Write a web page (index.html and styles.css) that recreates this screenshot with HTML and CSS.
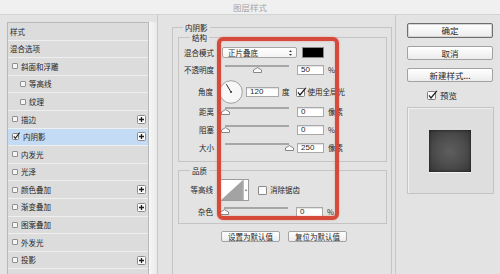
FILE: index.html
```html
<!DOCTYPE html>
<html lang="zh-CN">
<head>
<meta charset="utf-8">
<title>图层样式</title>
<link rel="stylesheet" href="styles.css">
</head>
<body>
<div class="titlebar">图层样式</div>
<div class="dialog">
  <div class="left">
    <div class="list">
      <div class="item">样式</div>
      <div class="item">混合选项</div>
      <div class="item"><span class="cb"></span>斜面和浮雕</div>
      <div class="item sub"><span class="cb"></span>等高线</div>
      <div class="item sub"><span class="cb"></span>纹理</div>
      <div class="item"><span class="cb"></span>描边<svg class="plus" viewBox="0 0 9 9"><rect x=".5" y=".5" width="8" height="8" rx="1"/><path d="M4.5 2V7M2 4.5H7"/></svg></div>
      <div class="item sel"><svg class="cbon" viewBox="0 0 9 8"><rect x=".5" y="1.5" width="6" height="6" rx="1"/><path d="M1.8 4.4L3.3 6.3L7.6 0.6"/></svg>内阴影<svg class="plus" viewBox="0 0 9 9"><rect x=".5" y=".5" width="8" height="8" rx="1"/><path d="M4.5 2V7M2 4.5H7"/></svg></div>
      <div class="item"><span class="cb"></span>内发光</div>
      <div class="item"><span class="cb"></span>光泽</div>
      <div class="item"><span class="cb"></span>颜色叠加<svg class="plus" viewBox="0 0 9 9"><rect x=".5" y=".5" width="8" height="8" rx="1"/><path d="M4.5 2V7M2 4.5H7"/></svg></div>
      <div class="item"><span class="cb"></span>渐变叠加<svg class="plus" viewBox="0 0 9 9"><rect x=".5" y=".5" width="8" height="8" rx="1"/><path d="M4.5 2V7M2 4.5H7"/></svg></div>
      <div class="item"><span class="cb"></span>图案叠加</div>
      <div class="item"><span class="cb"></span>外发光</div>
      <div class="item"><span class="cb"></span>投影<svg class="plus" viewBox="0 0 9 9"><rect x=".5" y=".5" width="8" height="8" rx="1"/><path d="M4.5 2V7M2 4.5H7"/></svg></div>
      <div class="item"></div>
    </div>
    <div class="scroll"></div>
  </div>

  <div class="mid">
    <fieldset class="outer">
      <legend>内阴影</legend>
      <fieldset class="group struct">
        <legend>结构</legend>
        <div class="row r-blend">
          <span class="lbl">混合模式</span>
          <div class="select"><span>正片叠底</span><svg class="updown" viewBox="0 0 5 8"><path d="M1 3L2.5 1.2L4 3ZM1 5L2.5 6.8L4 5Z"/></svg></div>
          <span class="color"></span>
        </div>
        <div class="row r-opacity">
          <span class="lbl">不透明度</span>
          <div class="slider"><svg class="thumb" style="left:50%" viewBox="0 0 9 6"><path d="M.5 5.5V3L4.5.6L8.5 3V5.5Z"/></svg></div>
          <span class="field">50</span><span class="unit">%</span>
        </div>
        <div class="row r-angle">
          <span class="lbl">角度</span>
          <svg class="dial" viewBox="0 0 24 24"><circle cx="12" cy="12" r="11.3"/><path d="M12 12L7.3 4.2"/><circle class="dot" cx="12" cy="12" r="1"/></svg>
          <span class="field wide">120</span><span class="unit u-deg">度</span>
          <svg class="chk" viewBox="0 0 11 10"><rect x=".5" y="1.5" width="8" height="8" rx="1"/><path d="M2 5.4L4 8L9.8 0.8"/></svg><span class="chklbl">使用全局光</span>
        </div>
        <div class="row r-dist">
          <span class="lbl">距离</span>
          <div class="slider"><svg class="thumb" style="left:0%" viewBox="0 0 9 6"><path d="M.5 5.5V3L4.5.6L8.5 3V5.5Z"/></svg></div>
          <span class="field">0</span><span class="unit">像素</span>
        </div>
        <div class="row r-choke">
          <span class="lbl">阻塞</span>
          <div class="slider"><svg class="thumb" style="left:0%" viewBox="0 0 9 6"><path d="M.5 5.5V3L4.5.6L8.5 3V5.5Z"/></svg></div>
          <span class="field">0</span><span class="unit">%</span>
        </div>
        <div class="row r-size">
          <span class="lbl">大小</span>
          <div class="slider"><svg class="thumb" style="left:100%" viewBox="0 0 9 6"><path d="M.5 5.5V3L4.5.6L8.5 3V5.5Z"/></svg></div>
          <span class="field">250</span><span class="unit">像素</span>
        </div>
      </fieldset>

      <fieldset class="group quality">
        <legend>品质</legend>
        <div class="row r-contour">
          <span class="lbl">等高线</span>
          <div class="contour">
            <svg class="curve" viewBox="0 0 24 22"><rect width="24" height="22" fill="#fff"/><path d="M0 22L24 0V22Z" fill="#a3a3a3"/></svg>
            <span class="drop"><svg viewBox="0 0 5 4"><path d="M1 1H4L2.5 3Z"/></svg></span>
          </div>
          <span class="box"></span><span class="chklbl">消除锯齿</span>
        </div>
        <div class="row r-noise">
          <span class="lbl">杂色</span>
          <div class="slider"><svg class="thumb" style="left:0%" viewBox="0 0 9 6"><path d="M.5 5.5V3L4.5.6L8.5 3V5.5Z"/></svg></div>
          <span class="field">0</span><span class="unit">%</span>
        </div>
      </fieldset>

      <div class="btnrow">
        <span class="sbtn">设置为默认值</span>
        <span class="sbtn">复位为默认值</span>
      </div>
    </fieldset>
  </div>

  <div class="right">
    <div class="btn default">确定</div>
    <div class="btn">取消</div>
    <div class="btn">新建样式...</div>
    <div class="preview-row">
      <svg class="chk" viewBox="0 0 11 10"><rect x=".5" y="1.5" width="8" height="8" rx="1"/><path d="M2 5.4L4 8L9.8 0.8"/></svg><span class="chklbl big">预览</span>
    </div>
    <div class="preview"><div class="sample"></div></div>
  </div>
</div>
<div class="annot"></div>
</body>
</html>
```

FILE: styles.css
```css
* { box-sizing: border-box; }
html, body { margin: 0; padding: 0; }
body {
  width: 500px;
  height: 274px;
  overflow: hidden;
  position: relative;
  background: #e3e3e3;
  color: #1f1f1f;
  font-family: "Noto Sans CJK SC", "Noto Sans", sans-serif;
}

.titlebar {
  height: 15px;
  background: #f0f0f0;
  border-bottom: 1px solid #d3d3d3;
  text-align: center;
  font-size: 8.5px;
  line-height: 14px;
  color: #a5a5a5;
}

.dialog { display: flex; height: 259px; overflow: hidden; }

/* left list */
.left {
  width: 158px;
  display: flex;
  padding: 7px 0 0 7px;
  border-right: 1px solid #c8c8c8;
  overflow: hidden;
}
.list {
  width: 142px;
  border: 1px solid #b8b8b8;
  border-bottom: none;
  background: #dadada;
  font-size: 7.5px;
  line-height: 1;
  overflow: hidden;
}
.scroll { width: 8px; background: linear-gradient(to right, #f7f7f7, #e9e9e9); }
.item {
  height: 17.6px;
  display: flex;
  align-items: center;
  padding-left: 2px;
  border-bottom: 1px solid #efefef;
  background: #dcdcdc;
  color: #262626;
}
.item.sel { background: #c3dbf4; }
.cb {
  width: 6px; height: 6px;
  border: 1px solid #8f8f8f;
  background: #f6f6f6;
  border-radius: 1px;
  margin: 0 3px 0 2px;
  flex: none;
}
.item.sub .cb { margin-left: 10px; }
.cbon { width: 9px; height: 8px; margin: -1px 2px 0 2px; flex: none; }
.cbon rect { fill: #f6f6f6; stroke: #7d7d7d; }
.cbon path { fill: none; stroke: #222; stroke-width: 1.1; }
.plus { width: 9px; height: 9px; margin-left: auto; margin-right: 2px; flex: none; }
.plus rect { fill: #fdfdfd; stroke: #8a8a8a; }
.plus path { stroke: #1e1e1e; stroke-width: 1.3; }

/* middle */
.mid {
  width: 238px;
  border-right: 1px solid #c8c8c8;
  padding: 7.5px 3px 0 14px;
  overflow: hidden;
}
fieldset { margin: 0; min-width: 0; border: 1px solid #c4c4c4; }
legend {
  font-size: 7.5px;
  line-height: 9px;
  padding: 0 2px;
  color: #222;
}
.outer {
  height: 251px;
  border-bottom: none;
  padding: 0 4px 0 5px;
}
.outer > legend { margin-left: 5px; }
.group { padding: 0; }
.group > legend { margin-left: 11px; }
.struct { margin-top: 1px; padding-bottom: 8px; }
.quality { margin-top: 3.5px; padding-bottom: 6px; }

.row { display: flex; align-items: center; font-size: 7.5px; }
.lbl { width: 35px; text-align: right; flex: none; line-height: 1; }
.r-blend { height: 11px; margin-top: 5.5px; }
.r-opacity { height: 10px; margin-top: 7px; }
.r-angle { height: 24px; margin-top: 5px; }
.r-dist { height: 10px; margin-top: 3px; }
.r-choke, .r-size { height: 10px; margin-top: 8px; }
.r-contour { height: 22px; margin-top: 4.5px; }
.r-noise { height: 10px; margin-top: 6px; }
.r-angle .lbl, .r-contour .lbl, .r-noise .lbl { width: 34px; }

.select {
  width: 75px; height: 11px;
  margin-left: 8px;
  background: linear-gradient(#ffffff, #f3f3f3);
  border: 1px solid #a6a6a6;
  border-radius: 2px;
  display: flex; align-items: center;
  padding: 0 3px 0 5px;
  font-size: 7.5px;
  line-height: 1;
}
.select span { flex: 1; }
.updown { width: 5px; height: 8px; }
.updown path { fill: #333; }
.color {
  width: 22px; height: 11px;
  margin-left: 5px;
  background: #000;
  border: 1px solid #8a8a8a;
}

.slider {
  position: relative;
  width: 64px; height: 10px;
  margin-left: 11px;
  align-self: flex-start;
  border-top: 2px solid #a7a7a7;
}
.thumb {
  position: absolute;
  top: 0;
  width: 9px; height: 6px;
  margin-left: -4.5px;
}
.thumb path { fill: #fbfbfb; stroke: #7a7a7a; stroke-width: 0.9; }

.field {
  width: 27px; height: 10px;
  margin-left: 8px;
  background: #fff;
  border: 1px solid #a9a9a9;
  box-shadow: inset 0 1px 1px rgba(0,0,0,0.12);
  font-family: "Liberation Sans", sans-serif;
  font-size: 8px;
  line-height: 8px;
  padding-left: 3px;
  flex: none;
}
.field.wide { width: 33px; margin-left: 3px; }
.unit { margin-left: 4px; line-height: 1; }
.u-deg { margin-left: 3px; }

.dial { width: 24px; height: 24px; margin-left: 6px; flex: none; }
.dial circle { fill: #f7f7f7; stroke: #8c8c8c; stroke-width: 0.8; }
.dial path { stroke: #333; stroke-width: 1; }
.dial .dot { fill: #333; stroke: none; }

.chk { width: 11px; height: 10px; flex: none; margin-left: 6px; }
.chk rect { fill: #fbfbfb; stroke: #7e7e7e; }
.chk path { fill: none; stroke: #1c1c1c; stroke-width: 1.2; }
.chklbl { margin-left: 1px; line-height: 1; }

.contour {
  display: flex;
  width: 29px; height: 22px;
  margin-left: 7px;
  border: 1px solid #9c9c9c;
  background: #fff;
}
.curve { width: 23px; height: 20px; display: block; }
.drop {
  flex: 1;
  border-left: 1px solid #bdbdbd;
  display: flex; align-items: center; justify-content: center;
}
.drop svg { width: 4px; height: 3px; }
.drop path { fill: #333; }
.box {
  width: 9px; height: 9px;
  margin-left: 9px;
  background: #fbfbfb;
  border: 1px solid #8a8a8a;
  border-radius: 1px;
}
.r-contour .chklbl { margin-left: 3px; }

.btnrow {
  display: flex;
  gap: 8px;
  margin-top: 7px;
  padding-left: 43px;
}
.sbtn {
  width: 59px; height: 11px;
  background: linear-gradient(#ffffff, #ececec);
  border: 1px solid #a3a3a3;
  border-radius: 2px;
  font-size: 7.5px;
  line-height: 9px;
  text-align: center;
}

/* right */
.right { width: 104px; padding: 8px 0 0 11px; }
.btn {
  width: 86px; height: 14px;
  margin-bottom: 8px;
  background: linear-gradient(#ffffff, #ececec);
  border: 1px solid #a2a2a2;
  border-radius: 2px;
  font-size: 8.5px;
  line-height: 12px;
  text-align: center;
}
.btn.default {
  height: 15px;
  border-color: #6e6e6e;
  box-shadow: inset 0 0 0 1px #d6d6d6;
  line-height: 13px;
}
.preview-row {
  display: flex; align-items: center;
  height: 10px;
  margin-top: 6px;
  padding-left: 14px;
  font-size: 8.5px;
}
.chklbl.big { margin-left: 2px; }
.preview {
  width: 87px; height: 87px;
  margin-top: 7px;
  border: 1px solid #c4c4c4;
  background: #dedede;
  box-shadow: inset 1px 1px 0 #f0f0f0;
  display: flex; align-items: center; justify-content: center;
}
.sample {
  width: 42px; height: 42px;
  margin-right: 2px;
  background: radial-gradient(circle, #5e5e5e 0%, #4f4f4f 45%, #353535 100%);
  box-shadow: inset 0 0 3px #1a1a1a, 0 1px 0 #f4f4f4;
}

/* red annotation overlay */
.annot {
  position: absolute;
  left: 217px; top: 37px;
  width: 122px; height: 183px;
  border: 4px solid #d54a3b;
  border-radius: 6px;
  box-shadow: 0 0 2px rgba(222, 100, 80, 0.6), inset 0 0 2px rgba(222, 100, 80, 0.5);
}
```
